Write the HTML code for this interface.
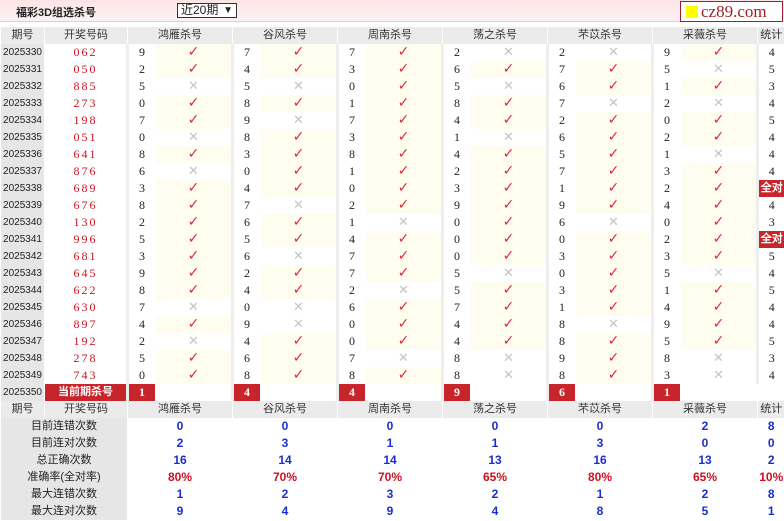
<!DOCTYPE html><html><head><meta charset="utf-8"><style>
*{margin:0;padding:0;box-sizing:border-box}
body{width:784px;height:521px;overflow:hidden;background:#fff;font-family:"Liberation Sans","Noto Sans CJK SC",sans-serif;font-size:11px;color:#222}
.top{position:absolute;left:0;top:0;width:784px;height:22px;background:linear-gradient(#fbe4e6,#fdf2f3);border-bottom:1px solid #e8c9cc}
.ttl{position:absolute;left:16px;top:4px;font-size:11px;font-weight:bold;color:#222}
.sel{position:absolute;left:177px;top:3px;width:60px;height:15px;border:1px solid #333;background:#fff;font-size:12px;line-height:13px;padding-left:3px}
.sel b{position:absolute;right:3px;top:0;font-size:10px}
.logo{position:absolute;left:680px;top:1px;width:103px;height:21px;border:1px solid #a0202a;background:#fff;font-family:"Liberation Serif",serif;font-size:17px;color:#a0202a;line-height:19px;padding-left:20px}
.logo i{position:absolute;left:5px;top:4px;width:12px;height:12px;background:#ff0}
table{position:absolute;left:0;top:27px;border-collapse:collapse;table-layout:fixed;width:784px}
td{height:17px;padding:0;text-align:center;vertical-align:middle;white-space:nowrap;overflow:hidden;border-left:1px solid #fff;line-height:17px}
.h td{background:#ebebeb;color:#333}
.q{background:#e6e6e6;font-size:10px;line-height:17px}
.k{color:#d01020;font-family:"Liberation Serif",serif;font-size:12px;letter-spacing:2px}
.n{font-family:"Liberation Serif",serif;font-size:12px;text-align:left;padding-left:10px;border-left:3px solid #eee}
.y{background:#fffdf0;color:#e0283a;font-family:"DejaVu Sans",sans-serif;font-size:14px;text-align:center}
.x{color:#c4c4c4;font-family:"DejaVu Sans",sans-serif;font-size:13px}
.s{font-family:"Liberation Serif",serif;font-size:12px;border-left:3px solid #eee}
.a{background:#c8242b;color:#fff;font-weight:bold;font-size:11px}
.c{background:#c8242b;color:#fff;font-weight:bold;font-family:"Liberation Serif",serif;font-size:12px;border-left:3px solid #eee}
.l{background:#e6e6e6}
.b{color:#1a2ecc;font-weight:bold;font-size:12px}
.r{color:#d01020;font-weight:bold;font-size:12px}
</style></head><body>
<div class="top"><div class="ttl">福彩3D组选杀号</div><div class="sel">近20期<b>▼</b></div><div class="logo"><i></i>cz89.com</div></div>
<table>
<colgroup><col style="width:44px"><col style="width:83px"><col style="width:28px"><col style="width:77px"><col style="width:28px"><col style="width:77px"><col style="width:28px"><col style="width:77px"><col style="width:28px"><col style="width:77px"><col style="width:28px"><col style="width:77px"><col style="width:28px"><col style="width:77px"><col style="width:27px"></colgroup>
<tr class="h"><td>期号</td><td>开奖号码</td><td colspan="2">鸿雁杀号</td><td colspan="2">谷风杀号</td><td colspan="2">周南杀号</td><td colspan="2">荡之杀号</td><td colspan="2">芣苡杀号</td><td colspan="2">采薇杀号</td><td>统计</td></tr>
<tr><td class="q">2025330</td><td class="k">062</td><td class="n">9</td><td class="y">✓</td><td class="n">7</td><td class="y">✓</td><td class="n">7</td><td class="y">✓</td><td class="n">2</td><td class="x">✕</td><td class="n">2</td><td class="x">✕</td><td class="n">9</td><td class="y">✓</td><td class="s">4</td></tr>
<tr><td class="q">2025331</td><td class="k">050</td><td class="n">2</td><td class="y">✓</td><td class="n">4</td><td class="y">✓</td><td class="n">3</td><td class="y">✓</td><td class="n">6</td><td class="y">✓</td><td class="n">7</td><td class="y">✓</td><td class="n">5</td><td class="x">✕</td><td class="s">5</td></tr>
<tr><td class="q">2025332</td><td class="k">885</td><td class="n">5</td><td class="x">✕</td><td class="n">5</td><td class="x">✕</td><td class="n">0</td><td class="y">✓</td><td class="n">5</td><td class="x">✕</td><td class="n">6</td><td class="y">✓</td><td class="n">1</td><td class="y">✓</td><td class="s">3</td></tr>
<tr><td class="q">2025333</td><td class="k">273</td><td class="n">0</td><td class="y">✓</td><td class="n">8</td><td class="y">✓</td><td class="n">1</td><td class="y">✓</td><td class="n">8</td><td class="y">✓</td><td class="n">7</td><td class="x">✕</td><td class="n">2</td><td class="x">✕</td><td class="s">4</td></tr>
<tr><td class="q">2025334</td><td class="k">198</td><td class="n">7</td><td class="y">✓</td><td class="n">9</td><td class="x">✕</td><td class="n">7</td><td class="y">✓</td><td class="n">4</td><td class="y">✓</td><td class="n">2</td><td class="y">✓</td><td class="n">0</td><td class="y">✓</td><td class="s">5</td></tr>
<tr><td class="q">2025335</td><td class="k">051</td><td class="n">0</td><td class="x">✕</td><td class="n">8</td><td class="y">✓</td><td class="n">3</td><td class="y">✓</td><td class="n">1</td><td class="x">✕</td><td class="n">6</td><td class="y">✓</td><td class="n">2</td><td class="y">✓</td><td class="s">4</td></tr>
<tr><td class="q">2025336</td><td class="k">641</td><td class="n">8</td><td class="y">✓</td><td class="n">3</td><td class="y">✓</td><td class="n">8</td><td class="y">✓</td><td class="n">4</td><td class="y">✓</td><td class="n">5</td><td class="y">✓</td><td class="n">1</td><td class="x">✕</td><td class="s">4</td></tr>
<tr><td class="q">2025337</td><td class="k">876</td><td class="n">6</td><td class="x">✕</td><td class="n">0</td><td class="y">✓</td><td class="n">1</td><td class="y">✓</td><td class="n">2</td><td class="y">✓</td><td class="n">7</td><td class="y">✓</td><td class="n">3</td><td class="y">✓</td><td class="s">4</td></tr>
<tr><td class="q">2025338</td><td class="k">689</td><td class="n">3</td><td class="y">✓</td><td class="n">4</td><td class="y">✓</td><td class="n">0</td><td class="y">✓</td><td class="n">3</td><td class="y">✓</td><td class="n">1</td><td class="y">✓</td><td class="n">2</td><td class="y">✓</td><td class="s a">全对</td></tr>
<tr><td class="q">2025339</td><td class="k">676</td><td class="n">8</td><td class="y">✓</td><td class="n">7</td><td class="x">✕</td><td class="n">2</td><td class="y">✓</td><td class="n">9</td><td class="y">✓</td><td class="n">9</td><td class="y">✓</td><td class="n">4</td><td class="y">✓</td><td class="s">4</td></tr>
<tr><td class="q">2025340</td><td class="k">130</td><td class="n">2</td><td class="y">✓</td><td class="n">6</td><td class="y">✓</td><td class="n">1</td><td class="x">✕</td><td class="n">0</td><td class="y">✓</td><td class="n">6</td><td class="x">✕</td><td class="n">0</td><td class="y">✓</td><td class="s">3</td></tr>
<tr><td class="q">2025341</td><td class="k">996</td><td class="n">5</td><td class="y">✓</td><td class="n">5</td><td class="y">✓</td><td class="n">4</td><td class="y">✓</td><td class="n">0</td><td class="y">✓</td><td class="n">0</td><td class="y">✓</td><td class="n">2</td><td class="y">✓</td><td class="s a">全对</td></tr>
<tr><td class="q">2025342</td><td class="k">681</td><td class="n">3</td><td class="y">✓</td><td class="n">6</td><td class="x">✕</td><td class="n">7</td><td class="y">✓</td><td class="n">0</td><td class="y">✓</td><td class="n">3</td><td class="y">✓</td><td class="n">3</td><td class="y">✓</td><td class="s">5</td></tr>
<tr><td class="q">2025343</td><td class="k">645</td><td class="n">9</td><td class="y">✓</td><td class="n">2</td><td class="y">✓</td><td class="n">7</td><td class="y">✓</td><td class="n">5</td><td class="x">✕</td><td class="n">0</td><td class="y">✓</td><td class="n">5</td><td class="x">✕</td><td class="s">4</td></tr>
<tr><td class="q">2025344</td><td class="k">622</td><td class="n">8</td><td class="y">✓</td><td class="n">4</td><td class="y">✓</td><td class="n">2</td><td class="x">✕</td><td class="n">5</td><td class="y">✓</td><td class="n">3</td><td class="y">✓</td><td class="n">1</td><td class="y">✓</td><td class="s">5</td></tr>
<tr><td class="q">2025345</td><td class="k">630</td><td class="n">7</td><td class="x">✕</td><td class="n">0</td><td class="x">✕</td><td class="n">6</td><td class="y">✓</td><td class="n">7</td><td class="y">✓</td><td class="n">1</td><td class="y">✓</td><td class="n">4</td><td class="y">✓</td><td class="s">4</td></tr>
<tr><td class="q">2025346</td><td class="k">897</td><td class="n">4</td><td class="y">✓</td><td class="n">9</td><td class="x">✕</td><td class="n">0</td><td class="y">✓</td><td class="n">4</td><td class="y">✓</td><td class="n">8</td><td class="x">✕</td><td class="n">9</td><td class="y">✓</td><td class="s">4</td></tr>
<tr><td class="q">2025347</td><td class="k">192</td><td class="n">2</td><td class="x">✕</td><td class="n">4</td><td class="y">✓</td><td class="n">0</td><td class="y">✓</td><td class="n">4</td><td class="y">✓</td><td class="n">8</td><td class="y">✓</td><td class="n">5</td><td class="y">✓</td><td class="s">5</td></tr>
<tr><td class="q">2025348</td><td class="k">278</td><td class="n">5</td><td class="y">✓</td><td class="n">6</td><td class="y">✓</td><td class="n">7</td><td class="x">✕</td><td class="n">8</td><td class="x">✕</td><td class="n">9</td><td class="y">✓</td><td class="n">8</td><td class="x">✕</td><td class="s">3</td></tr>
<tr><td class="q">2025349</td><td class="k">743</td><td class="n">0</td><td class="y">✓</td><td class="n">8</td><td class="y">✓</td><td class="n">8</td><td class="y">✓</td><td class="n">8</td><td class="x">✕</td><td class="n">8</td><td class="y">✓</td><td class="n">3</td><td class="x">✕</td><td class="s">4</td></tr>
<tr><td class="q">2025350</td><td class="a">当前期杀号</td><td class="c">1</td><td></td><td class="c">4</td><td></td><td class="c">4</td><td></td><td class="c">9</td><td></td><td class="c">6</td><td></td><td class="c">1</td><td></td><td></td></tr>
<tr class="h"><td>期号</td><td>开奖号码</td><td colspan="2">鸿雁杀号</td><td colspan="2">谷风杀号</td><td colspan="2">周南杀号</td><td colspan="2">荡之杀号</td><td colspan="2">芣苡杀号</td><td colspan="2">采薇杀号</td><td>统计</td></tr>
<tr><td class="l" colspan="2">目前连错次数</td><td class="b" colspan="2">0</td><td class="b" colspan="2">0</td><td class="b" colspan="2">0</td><td class="b" colspan="2">0</td><td class="b" colspan="2">0</td><td class="b" colspan="2">2</td><td class="b">8</td></tr>
<tr><td class="l" colspan="2">目前连对次数</td><td class="b" colspan="2">2</td><td class="b" colspan="2">3</td><td class="b" colspan="2">1</td><td class="b" colspan="2">1</td><td class="b" colspan="2">3</td><td class="b" colspan="2">0</td><td class="b">0</td></tr>
<tr><td class="l" colspan="2">总正确次数</td><td class="b" colspan="2">16</td><td class="b" colspan="2">14</td><td class="b" colspan="2">14</td><td class="b" colspan="2">13</td><td class="b" colspan="2">16</td><td class="b" colspan="2">13</td><td class="b">2</td></tr>
<tr><td class="l" colspan="2">准确率(全对率)</td><td class="r" colspan="2">80%</td><td class="r" colspan="2">70%</td><td class="r" colspan="2">70%</td><td class="r" colspan="2">65%</td><td class="r" colspan="2">80%</td><td class="r" colspan="2">65%</td><td class="r">10%</td></tr>
<tr><td class="l" colspan="2">最大连错次数</td><td class="b" colspan="2">1</td><td class="b" colspan="2">2</td><td class="b" colspan="2">3</td><td class="b" colspan="2">2</td><td class="b" colspan="2">1</td><td class="b" colspan="2">2</td><td class="b">8</td></tr>
<tr><td class="l" colspan="2">最大连对次数</td><td class="b" colspan="2">9</td><td class="b" colspan="2">4</td><td class="b" colspan="2">9</td><td class="b" colspan="2">4</td><td class="b" colspan="2">8</td><td class="b" colspan="2">5</td><td class="b">1</td></tr>
</table>
</body></html>
